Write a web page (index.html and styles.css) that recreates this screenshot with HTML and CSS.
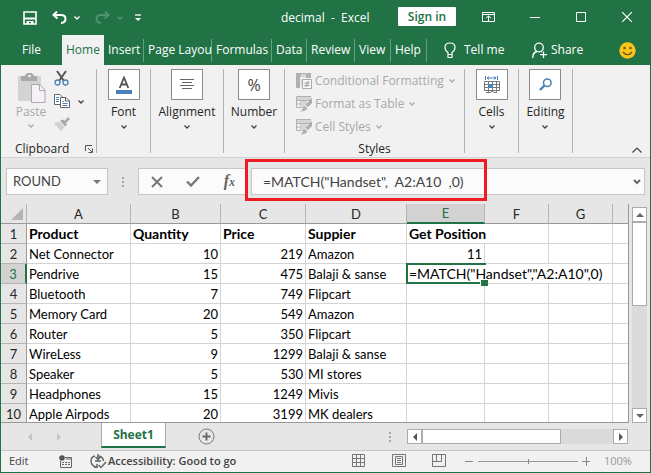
FILE: index.html
```html
<!DOCTYPE html>
<html lang="en">
<head>
<meta charset="utf-8">
<title>decimal - Excel</title>
<link rel="stylesheet" href="styles.css">
</head>
<body>
<svg width="0" height="0" class="defs" aria-hidden="true">
  <symbol id="chev" viewBox="0 0 6 4"><path d="M.5 .5L3 3L5.500 .5" fill="none" stroke="currentColor" stroke-width="1.300"/></symbol>
  <symbol id="tablebrush" viewBox="0 0 16 16"><path d="M.5 .5H15M.5 .5V11.500H6M.5 4.500H14M.5 8H10M5 .5V11M10 .5V8" fill="none" stroke="#b1b1b1"/><path d="M1 1h14v3H1z" fill="#d6d6d6"/><path d="M5 5h5v4l-4 3H5z" fill="#d9d3dc"/><path d="M16 2V7L12 11L9.500 9Z" fill="#ababab"/><path d="M9 10L11.500 12.500Q9 16 4 15.500Q7 14 6.500 12Q7 10 9 10Z" fill="#b1b1b1"/></symbol>
</svg>
<div class="window">
  <header class="titlebar">
    <div class="quick">
      <button aria-label="Save"><svg width="14" height="14" viewBox="0 0 14 14"><path d="M1 1H13V13H1Z" fill="none" stroke="#fff" stroke-width="1.600"/><path d="M1 6.500H13V8.500H1ZM3.500 10H10.500V13H8V11H6V13H3.500Z" fill="#fff"/></svg></button>
      <button class="undo" aria-label="Undo"><svg width="15" height="13" viewBox="0 0 15 13"><path d="M5 .5L1.500 4L5.500 7.500M2 4H9Q13.500 4 13.500 8Q13.500 11.500 9 12" fill="none" stroke="#fff" stroke-width="2"/></svg><svg class="chev" width="6" height="4"><use href="#chev"/></svg></button>
      <button class="redo" aria-label="Redo"><svg width="15" height="13" viewBox="0 0 15 13"><path d="M10 .5L13.500 4L9.500 7.500M13 4H6Q1.500 4 1.500 8Q1.500 11.500 6 12" fill="none" stroke="currentColor" stroke-width="2"/></svg><svg class="chev" width="6" height="4"><use href="#chev"/></svg></button>
      <button aria-label="Customize toolbar"><svg width="6" height="8" viewBox="0 0 6 8"><path d="M0 1H6" stroke="#fff" stroke-width="1.300"/><path d="M0 4H6L3 7Z" fill="#fff"/></svg></button>
    </div>
    <h1>decimal&nbsp; -&nbsp; Excel</h1>
    <button class="signin">Sign in</button>
    <div class="winctl">
      <button aria-label="Ribbon display options"><svg width="14" height="12" viewBox="0 0 14 12"><path d="M.5 1.500H12.500V10.500H.5ZM.5 3.500H12.500M6.500 10V5M4 7L6.500 5L9 7" fill="none" stroke="#fff"/></svg></button>
      <button aria-label="Minimize"><svg width="10" height="10" viewBox="0 0 10 10"><path d="M0 5.500H10" stroke="#fff"/></svg></button>
      <button aria-label="Maximize"><svg width="10" height="10" viewBox="0 0 10 10"><path d="M.5 .5H9.500V9.500H.5Z" fill="none" stroke="#fff"/></svg></button>
      <button aria-label="Close"><svg width="10" height="10" viewBox="0 0 10 10"><path d="M0 0L10 10M10 0L0 10" stroke="#fff" stroke-width="1.200"/></svg></button>
    </div>
  </header>
  <nav class="tabs">
    <button class="file">File</button>
    <button class="tab active">Home</button>
    <button class="tab">Insert</button>
    <button class="tab">Page Layou</button>
    <button class="tab">Formulas</button>
    <button class="tab">Data</button>
    <button class="tab">Review</button>
    <button class="tab">View</button>
    <button class="tab">Help</button>
    <button class="tell"><svg width="12" height="17" viewBox="0 0 12 17"><path d="M4 12.500V10.500Q1 8.500 1 5.500Q1 1 6 1Q11 1 11 5.500Q11 8.500 8 10.500V12.500ZM4 12.500V15.500H8V12.500" fill="none" stroke="#fff" stroke-width="1.200"/></svg>Tell me</button>
    <button class="share"><svg width="15" height="17" viewBox="0 0 15 17"><circle cx="7" cy="5.500" r="4.300" fill="none" stroke="#fff" stroke-width="1.300"/><path d="M.7 16Q.7 10.500 5 9.500M9 9.500L10 10M11.500 9.500V16M8 12.700H15" fill="none" stroke="#fff" stroke-width="1.300"/></svg>Share</button>
    <button class="smile" aria-label="Feedback"><svg width="17" height="17" viewBox="0 0 17 17"><circle cx="8.500" cy="8.500" r="8.200" fill="#fcc419"/><circle cx="5.500" cy="6" r="1.200" fill="#674a14"/><circle cx="11.500" cy="6" r="1.200" fill="#674a14"/><path d="M4 10Q8.500 15.500 13 10" fill="none" stroke="#674a14" stroke-width="1.200"/></svg></button>
  </nav>
  <section class="ribbon">
    <div class="group clipboard">
      <div class="cliprow">
        <button class="paste" disabled><svg width="29" height="31" viewBox="0 0 29 31"><path d="M1 3H24V28H1Z" fill="#d5d2d5"/><path d="M4 3H8V1.500Q10 1.500 10 0H15Q15 1.500 17 1.500V3H20V8H4Z" fill="#a9a9a9"/><circle cx="12.500" cy="3" r="1.300" fill="#f1f1f1"/><path d="M14.500 11.500H23L28 17V29.500H14.500Z" fill="#f6f0f7" stroke="#ababab"/><path d="M22.500 12V17.500H28" fill="none" stroke="#ababab"/></svg><span>Paste</span><svg class="chev" width="6" height="4"><use href="#chev"/></svg></button>
        <div class="cliptools">
          <button aria-label="Cut"><svg width="15" height="16" viewBox="0 0 15 16"><path d="M3 1L10 11M12 1L5 11" stroke="#555" stroke-width="2"/><circle cx="3.500" cy="12.500" r="2.500" fill="#f1f1f1" stroke="#4a80b8" stroke-width="1.300"/><circle cx="11.500" cy="12.500" r="2.500" fill="#f1f1f1" stroke="#4a80b8" stroke-width="1.300"/></svg></button>
          <button aria-label="Copy" class="copy"><svg width="16" height="15" viewBox="0 0 16 15"><path d="M.5 .5H6L8.500 3V10.500H.5Z" fill="#fff" stroke="#666"/><path d="M2 3.500H5M2 5.500H5M2 7.500H5" stroke="#4a80b8"/><path d="M6.500 3.500H12L15.500 7V13.500H6.500Z" fill="#fff" stroke="#666"/><path d="M11.500 4V7H15" fill="none" stroke="#666"/><path d="M8.500 7.500H10M8.500 9.500H13.500M8.500 11.500H13.500" stroke="#4a80b8"/></svg><svg class="chev" width="6" height="4"><use href="#chev"/></svg></button>
          <button aria-label="Format painter" disabled><svg width="16" height="15" viewBox="0 0 16 15"><path d="M0 6L5 4.500L10.500 10L7 14.500Z" fill="#d4ced6"/><path d="M6 3.500L9 2.500L10.500 4L14 0L16 2L12 6L13 7.500L11 9.500Z" fill="#a7a7a7"/></svg></button>
        </div>
      </div>
      <div class="caption">Clipboard <button aria-label="Clipboard settings"><svg width="8" height="8" viewBox="0 0 8 8"><path d="M.5 6V.5H7M3 3L7 7M7.500 3.500V7.500H3.500" fill="none" stroke="#555"/></svg></button></div>
    </div>
    <div class="group"><button class="big"><i><svg width="16" height="18" viewBox="0 0 16 18"><path d="M3.700 12L8 1.500L12.300 12M5.200 8.500H10.800" fill="none" stroke="#555" stroke-width="1.800"/><path d="M0 14H16V18H0Z" fill="#4a80b8"/></svg></i>Font<svg class="chev" width="6" height="4"><use href="#chev"/></svg></button></div>
    <div class="group"><button class="big"><i><svg width="14" height="12" viewBox="0 0 14 12"><path d="M0 .5H14M2 3.500H12M0 6.500H14M2 9.500H12" stroke="#666"/></svg></i>Alignment<svg class="chev" width="6" height="4"><use href="#chev"/></svg></button></div>
    <div class="group"><button class="big"><i class="pct">%</i>Number<svg class="chev" width="6" height="4"><use href="#chev"/></svg></button></div>
    <div class="group styles">
      <button disabled><svg width="16" height="16" viewBox="0 0 16 16"><path d="M0 0H15V5H10V4H0ZM0 4H4V15H0Z" fill="#b1b1b1"/><path d="M5 1H10V4H5ZM5 6H7V13H5Z" fill="#d4d4d4"/><path d="M6.500 6.500H15.500V15.500H6.500Z" fill="#f6f6f6" stroke="#ababab"/><path d="M8.500 10H13.500M8.500 12.500H13.500M12.500 8L9.500 14" stroke="#999"/></svg>Conditional Formatting<svg class="chev" width="6" height="4"><use href="#chev"/></svg></button>
      <button disabled><svg width="16" height="16"><use href="#tablebrush"/></svg>Format as Table<svg class="chev" width="6" height="4"><use href="#chev"/></svg></button>
      <button disabled><svg width="16" height="16"><use href="#tablebrush"/></svg>Cell Styles<svg class="chev" width="6" height="4"><use href="#chev"/></svg></button>
      <div class="caption">Styles</div>
    </div>
    <div class="group"><button class="big"><i><svg width="16" height="18" viewBox="0 0 16 18"><path d="M1.500 0V4M13.500 0V4M3 2H12M5 .5L3 2L5 3.500M10 .5L12 2L10 3.500" fill="none" stroke="#4a80b8"/><path d="M.5 5.500H15.500V14.500H.5ZM.5 8.500H15.500M.5 11.500H15.500M4.500 5V16M8.500 5V16M12.500 5V16M2 16.500H6L8 15L10 16.500H13" fill="none" stroke="#777"/><path d="M4 8H9V12H4Z" fill="#4a80b8"/></svg></i>Cells<svg class="chev" width="6" height="4"><use href="#chev"/></svg></button></div>
    <div class="group"><button class="big"><i><svg width="13" height="13" viewBox="0 0 13 13"><circle cx="8.300" cy="4.700" r="3.800" fill="none" stroke="#4a80b8" stroke-width="1.500"/><path d="M5.500 7.500L1 12" stroke="#4a80b8" stroke-width="2.400"/></svg></i>Editing<svg class="chev" width="6" height="4"><use href="#chev"/></svg></button></div>
    <button class="collapse" aria-label="Collapse ribbon"><svg width="10" height="6" viewBox="0 0 10 6"><path d="M.5 5.500L5 1L9.500 5.500" fill="none" stroke="#444" stroke-width="1.200"/></svg></button>
  </section>
  <section class="formulabar">
    <div class="namebox"><input aria-label="Name box" value="ROUND"><svg width="8" height="4" viewBox="0 0 8 4"><path d="M0 0H8L4 4Z" fill="#777"/></svg></div>
    <span class="grip"></span>
    <div class="fxbuttons">
      <button aria-label="Cancel"><svg width="12" height="12" viewBox="0 0 12 12"><path d="M1 1L11 11M11 1L1 11" stroke="#777" stroke-width="2"/></svg></button>
      <button aria-label="Enter"><svg width="14" height="11" viewBox="0 0 14 11"><path d="M1 5.500L5 9.500L13 1" fill="none" stroke="#777" stroke-width="2.400"/></svg></button>
      <button class="fx" aria-label="Insert function">f<small>x</small></button>
    </div>
    <div class="formula"><input aria-label="Formula" value="=MATCH(&quot;Handset&quot;,&nbsp; A2:A10&nbsp; ,0)"><svg width="8" height="6" viewBox="0 0 8 6"><path d="M1 1L4 4L7 1" fill="none" stroke="#666" stroke-width="2"/></svg></div>
    <span class="highlight"></span>
  </section>
  <main class="sheet">
    <div class="gridwrap">
      <table>
        <colgroup><col class="c0"><col class="ca"><col class="cb"><col class="cc"><col class="cd"><col class="ce"><col class="cf"><col class="cf"><col></colgroup>
        <thead><tr><th class="corner"><svg width="12" height="12" viewBox="0 0 12 12"><path d="M12 0V12H0Z" fill="#b4b4b4"/></svg></th><th>A</th><th>B</th><th>C</th><th>D</th><th class="sel">E</th><th>F</th><th>G</th><th class="rest"></th></tr></thead>
        <tbody>
          <tr class="bold"><th>1</th><td>Product</td><td>Quantity</td><td>Price</td><td>Suppier</td><td colspan="2">Get Position</td><td></td><td></td></tr>
          <tr><th>2</th><td>Net Connector</td><td class="n">10</td><td class="n">219</td><td>Amazon</td><td class="n">11</td><td></td><td></td><td></td></tr>
          <tr><th class="sel">3</th><td>Pendrive</td><td class="n">15</td><td class="n">475</td><td>Balaji &amp; sanse</td><td class="edit" colspan="3">=MATCH("Handset","A2:A10",0)<span class="cursor"></span></td><td></td></tr>
          <tr><th>4</th><td>Bluetooth</td><td class="n">7</td><td class="n">749</td><td>Flipcart</td><td></td><td></td><td></td><td></td></tr>
          <tr><th>5</th><td>Memory Card</td><td class="n">20</td><td class="n">549</td><td>Amazon</td><td></td><td></td><td></td><td></td></tr>
          <tr><th>6</th><td>Router</td><td class="n">5</td><td class="n">350</td><td>Flipcart</td><td></td><td></td><td></td><td></td></tr>
          <tr><th>7</th><td>WireLess</td><td class="n">9</td><td class="n">1299</td><td>Balaji &amp; sanse</td><td></td><td></td><td></td><td></td></tr>
          <tr><th>8</th><td>Speaker</td><td class="n">5</td><td class="n">530</td><td>MI stores</td><td></td><td></td><td></td><td></td></tr>
          <tr><th>9</th><td>Headphones</td><td class="n">15</td><td class="n">1249</td><td>Mivis</td><td></td><td></td><td></td><td></td></tr>
          <tr><th>10</th><td>Apple Airpods</td><td class="n">20</td><td class="n">3199</td><td>MK dealers</td><td></td><td></td><td></td><td></td></tr>
        </tbody>
      </table>
    </div>
    <div class="vscroll">
      <button aria-label="Scroll up"><svg width="8" height="4" viewBox="0 0 8 4"><path d="M0 4H8L4 0Z" fill="#666"/></svg></button>
      <span class="vthumb"></span>
      <button aria-label="Scroll down"><svg width="8" height="4" viewBox="0 0 8 4"><path d="M0 0H8L4 4Z" fill="#666"/></svg></button>
    </div>
  </main>
  <div class="sheetbar">
    <div class="sheetnav">
      <button aria-label="Previous sheet"><svg width="4" height="8" viewBox="0 0 4 8"><path d="M4 0V8L0 4Z" fill="#c3c3c3"/></svg></button>
      <button aria-label="Next sheet"><svg width="4" height="8" viewBox="0 0 4 8"><path d="M0 0V8L4 4Z" fill="#c3c3c3"/></svg></button>
    </div>
    <button class="sheettab">Sheet1</button>
    <button class="add" aria-label="New sheet"><svg width="17" height="17" viewBox="0 0 17 17"><circle cx="8.500" cy="8.500" r="7.500" fill="none" stroke="#777"/><path d="M8.500 4.500V12.500M4.500 8.500H12.500" stroke="#666" stroke-width="1.800"/></svg></button>
    <span class="grip"></span>
    <div class="hscroll">
      <button aria-label="Scroll left"><svg width="4" height="8" viewBox="0 0 4 8"><path d="M4 0V8L0 4Z" fill="#555"/></svg></button>
      <span class="hthumb"></span>
      <button aria-label="Scroll right"><svg width="4" height="8" viewBox="0 0 4 8"><path d="M0 0V8L4 4Z" fill="#555"/></svg></button>
    </div>
  </div>
  <footer class="status">
    <span class="mode">Edit</span>
    <svg width="13" height="13" viewBox="0 0 13 13"><path d="M6 2.500H12.500V12.500H1.500V6" fill="none" stroke="#666"/><path d="M7 4H12M3 7.500H5M6 7.500H8M9 7.500H11M3 9.500H5M6 9.500H8M9 9.500H11" stroke="#666"/><circle cx="3" cy="3" r="2.800" fill="#555"/></svg>
    <button class="access"><svg width="17" height="15" viewBox="0 0 17 15"><path d="M5 2Q1 3 1 7Q1 11 5.500 13M4 13.300H7V10M9 2Q13 3 13.500 7M8 0V8M5.500 3L8 5.500L10.500 3M5 7H11M8.500 11L11 13.500L16 8" fill="none" stroke="#666" stroke-width="1.500"/></svg>Accessibility: Good to go</button>
    <div class="views">
      <button aria-label="Normal view"><svg width="14" height="14" viewBox="0 0 14 14"><path d="M.5 .5H12.500V12.500H.5ZM.5 4.500H12.500M.5 8.500H12.500M4.500 .5V12.500M8.500 .5V12.500" fill="none" stroke="#777"/></svg></button>
      <button aria-label="Page layout view"><svg width="14" height="14" viewBox="0 0 14 14"><path d="M.5 .5H13.500V12.500H.5ZM3.500 2.500H10.500V10.500H3.500ZM5 4.500H9M5 6.500H9M5 8.500H9" fill="none" stroke="#777"/></svg></button>
      <button aria-label="Page break view"><svg width="14" height="14" viewBox="0 0 14 14"><path d="M.5 .5H13.500V12.500H.5ZM.5 7.500H9.500V.5M4.500 .5V7.500" fill="none" stroke="#777"/></svg></button>
    </div>
    <div class="zoom"><button aria-label="Zoom out"><svg width="9" height="9" viewBox="0 0 9 9"><path d="M0 4.500H8" stroke="#888"/></svg></button><input type="range" aria-label="Zoom" min="0" max="200" value="100"><button aria-label="Zoom in"><svg width="9" height="9" viewBox="0 0 9 9"><path d="M0 4.500H8M4.500 0V9" stroke="#888"/></svg></button></div>
    <span class="percent">100%</span>
  </footer>
</div>
</body>
</html>
```

FILE: styles.css
```css
* { box-sizing: border-box; }
body { margin: 0; font: 12px/16px "Open Sans", "Noto Sans", sans-serif; color: #262626; }
button, input { font: inherit; color: inherit; background: none; border: 0; padding: 0; margin: 0; }
svg { display: block; flex: none; }
.defs { position: absolute; }
.window { display: flex; flex-direction: column; min-height: 100vh; border: 1px solid #217346; border-top: 0; background: #e6e6e6; }

.titlebar { height: 35px; display: grid; grid-template-columns: 280px 1fr 76px 176px; align-items: center; background: #217346; color: #fff; }
.quick { display: flex; align-items: center; padding-left: 22px; }
.quick button { display: flex; align-items: center; gap: 7px; }
.quick .undo { margin: 0 15px; }
.quick .redo { margin-right: 12px; color: #4f9470; }
h1 { margin: 0; font-size: 12px; font-weight: 400; white-space: nowrap; }
.signin { width: 58px; height: 19px; margin-bottom: 2px; justify-self: start; background: #fff; color: #217346; font-weight: 600; border-radius: 1px; white-space: nowrap; }
.winctl { display: grid; grid-template-columns: repeat(4, 46px); margin: 0 0 2px -8px; }
.winctl button { display: grid; place-items: center; }

.tabs { height: 30px; display: grid; grid-template-columns: 61px 42px 40px 68px 60px 35px 48px 36px 36px 1fr 72px 46px; background: #217346; color: #fff; }
.tabs button { height: 30px; white-space: nowrap; }
.tab { padding-left: 4px; text-align: left; background: linear-gradient(#63a27e, #63a27e) right center / 1px 23px no-repeat; }
.tab.active { background: #f1f1f1; color: #217346; }
.tabs .tell, .tabs .share { display: flex; align-items: center; }
.tabs .tell { gap: 8px; padding-left: 17px; }
.tabs .share { gap: 4px; }
.smile { display: grid; place-items: center; }

.ribbon { height: 93px; display: grid; grid-template-columns: 96px 54px 73px 61px 180px 54px 54px 1fr; padding: 4px 0; background: #f1f1f1; border-bottom: 1px solid #d2d2d2; }
.group { border-right: 1px solid #b3b3b3; display: flex; flex-direction: column; align-items: center; min-width: 0; height: 84px; }
.chev { color: #444; }
button:disabled, button:disabled .chev { color: #a9a9a9; }
.titlebar .chev { color: inherit; }
.big { display: flex; flex-direction: column; align-items: center; white-space: nowrap; }
.big i { width: 32px; height: 31px; margin-bottom: 4px; display: grid; place-items: center; background: #fff; border: 1px solid #8b8b8b; }
.big .chev { margin-top: 5px; }
.big .pct { font: 16px "Open Sans", sans-serif; color: #444; }
.clipboard { justify-content: space-between; align-items: stretch; }
.cliprow { display: flex; padding-left: 14px; gap: 7px; }
.paste { width: 32px; display: flex; flex-direction: column; align-items: center; padding-top: 4px; }
.paste .chev { margin-top: 4px; }
.cliptools { display: flex; flex-direction: column; gap: 8px; padding-top: 1px; }
.cliptools button { display: flex; align-items: center; gap: 8px; }
.caption { text-align: center; line-height: 8px; }
.clipboard .caption { display: flex; align-items: center; justify-content: space-between; padding: 0 3px 0 14px; }
.styles { align-items: flex-start; padding-left: 11px; }
.styles button { display: flex; align-items: center; gap: 3px; height: 23px; white-space: nowrap; }
.styles .chev { margin-left: 2px; }
.styles .caption { align-self: stretch; margin-top: auto; padding-right: 11px; }
.collapse { align-self: end; justify-self: end; padding-right: 8px; }

.formulabar { position: relative; height: 46px; display: flex; align-items: flex-start; padding: 10px 5px 0; font: 13px/25px "Lato", sans-serif; color: #444; }
.namebox, .fxbuttons, .formula { height: 27px; border: 1px solid #c6c6c6; background: #fbfbfb; display: flex; align-items: center; }
.namebox { width: 102px; padding: 0 6px; }
.namebox input, .formula input { flex: 1; min-width: 0; width: 0; height: 25px; outline: 0; }
.grip { width: 2px; height: 10px; background: repeating-linear-gradient(#a5a5a5 0 2px, transparent 2px 4px); }
.formulabar .grip { margin: 9px 14px; }
.fxbuttons { width: 107px; padding: 0 10px 0 12px; justify-content: space-between; border-right: 0; }
.fx { font: italic 700 16px/20px "Liberation Serif", serif; color: #666; }
.fx small { font-size: 12px; }
.formula { flex: 1; margin-left: 6px; padding: 0 3px 0 11px; font-size: 14px; }
.highlight { position: absolute; left: 244px; top: 1px; width: 242px; height: 42px; border: 3px solid #ed1c24; }

.sheet { display: flex; gap: 3px; padding-right: 3px; height: 219px; }
.gridwrap { flex: 1; min-width: 0; overflow: hidden; border: solid #999; border-width: 0 1px 1px 0; }
table { width: 100%; table-layout: fixed; border-collapse: separate; border-spacing: 0; font: 13px/18px "Lato", sans-serif; color: #000; }
.c0 { width: 26px; } .ca { width: 104px; } .cb { width: 90px; } .cc { width: 85px; } .cd { width: 101px; } .ce { width: 78px; } .cf { width: 64px; }
td, th { height: 20px; padding: 0; border: solid #d4d4d4; border-width: 0 1px 1px 0; white-space: nowrap; }
th { font-weight: 400; background: #e6e6e6; color: #262626; text-align: center; border-color: #b5b5b5; }
thead th { border-bottom-color: #999; }
tbody th { border-right-color: #999; }
td { background: #fff; padding: 0 2px; }
td:last-child, .rest { border-right: 0; }
.n { text-align: right; }
.bold td { font-size: 14px; font-weight: 700; }
.corner svg { margin-left: 10px; }
th.sel { background: #d2d2d2; color: #217346; }
thead th.sel { border-bottom: 2px solid #217346; }
tbody th.sel { border-right: 2px solid #217346; }
.edit { position: relative; font-size: 14px; }
.cursor { position: absolute; left: -1px; top: -1px; width: 80px; height: 21px; border: 2px solid #217346; border-right: 0; }
.cursor::after { content: ""; position: absolute; right: -2px; bottom: -4px; width: 7px; height: 6px; background: #217346; border: solid #fff; border-width: 1px 0 0 1px; }
.vscroll { width: 15px; margin-top: 3px; display: flex; flex-direction: column; background: #dadada; }
.vscroll button, .hscroll button { width: 15px; height: 15px; display: grid; place-items: center; background: #fff; border: 1px solid #ababab; flex: none; }
.vthumb { height: 84px; background: #fff; border: 1px solid #ababab; margin-bottom: auto; }

.sheetbar { height: 27px; display: flex; align-items: center; padding-right: 22px; }
.sheetnav { width: 100px; display: flex; gap: 25px; padding-left: 27px; }
.sheettab { align-self: flex-start; width: 65px; height: 25px; background: #fff; color: #217346; font-weight: 700; border: solid #ababab; border-width: 0 1px; border-bottom: 2px solid #217346; }
.add { margin-left: 32px; }
.sheetbar .grip { margin: 0 16px 0 auto; }
.hscroll { width: 221px; display: flex; background: #dadada; }
.hthumb { width: 139px; border: 1px solid #ababab; background: #fff; margin-right: auto; }

.status { height: 22px; display: flex; align-items: center; padding-bottom: 1px; background: #f1f1f1; border-top: 1px solid #c6c6c6; font-size: 11px; color: #444; }
.mode { width: 58px; padding-left: 8px; }
.access { display: flex; align-items: center; gap: 1px; margin-left: 18px; font-weight: 600; white-space: nowrap; }
.views { margin-left: auto; display: flex; gap: 26px; }
.zoom { display: flex; align-items: center; gap: 4px; margin: 0 13px 0 19px; }
input[type=range] { appearance: none; width: 100px; height: 5px; background: linear-gradient(#999, #999) center / 100% 1px no-repeat; }
input[type=range]::-webkit-slider-thumb { appearance: none; width: 1px; height: 5px; background: #888; }
.percent { color: #999; width: 46px; }
```
